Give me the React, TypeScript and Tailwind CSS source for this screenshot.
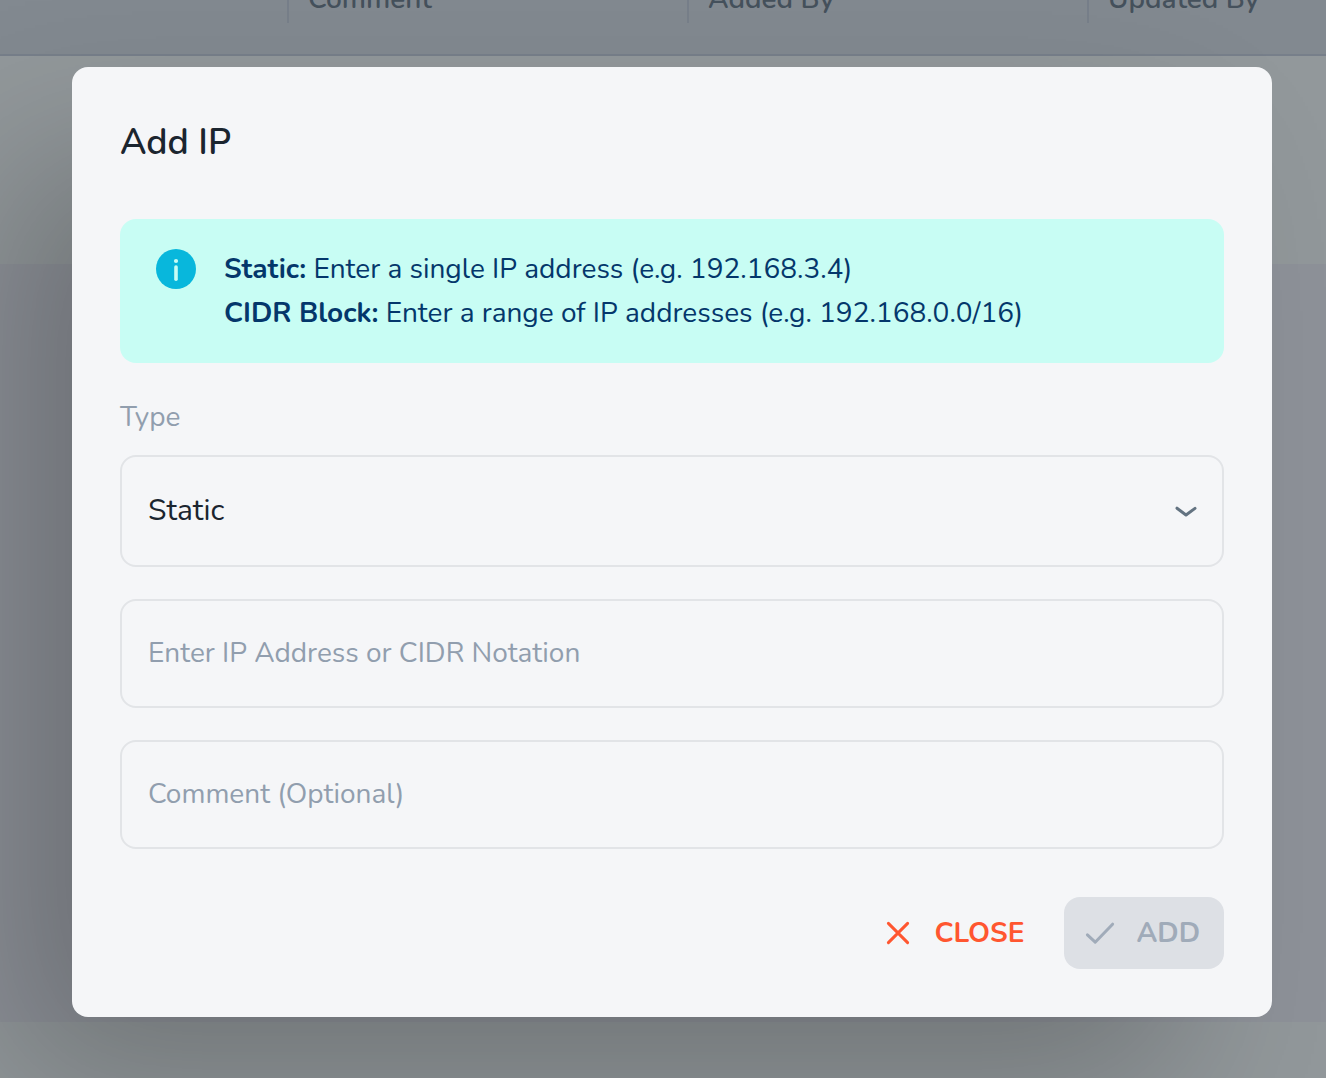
import { useState } from "react";

const columns = ["Comment", "Added By", "Updated By"];

const fieldClass =
    "block w-full rounded-2xl border-2 border-[#e2e4e7] bg-transparent px-[26px] pb-[2px] text-[#1b252f] outline-none placeholder:text-[#919eae] placeholder:opacity-100";

function InfoIcon() {
    return (
        <svg className="size-10 shrink-0" viewBox="0 0 40 40" fill="none" aria-hidden="true">
            <circle cx="20" cy="20" r="20" fill="#08b7dc" />
            <circle cx="20" cy="12" r="2.1" fill="#c8fdf4" />
            <path d="M20 18v12.2" stroke="#c8fdf4" strokeWidth="3.6" strokeLinecap="round" />
        </svg>
    );
}

function TableBackground() {
    return (
        <div className="flex min-h-screen flex-col bg-[#92989b]">
            <div className="flex h-14 flex-col justify-end overflow-hidden border-b-2 border-[#777f8a] bg-[#828990]">
                <table className="w-full shrink-0 table-fixed">
                    <thead>
                        <tr className="h-[110px]">
                            <th className="w-[287px] p-0" aria-label="IP" />
                            {columns.map((name, idx) => (
                                <th
                                    key={name}
                                    className={idx < 2 ? "w-[400px] p-0 text-left font-semibold" : "p-0 text-left font-semibold"}
                                >
                                    <div className="h-12 border-l-2 border-[#777f8a] pl-[19px] leading-[48px] whitespace-nowrap text-[#45515c]">
                                        {name}
                                    </div>
                                </th>
                            ))}
                        </tr>
                    </thead>
                </table>
            </div>
            <div className="mt-52 h-[758px] bg-[#8e9299]" />
        </div>
    );
}

function AddIpDialog() {
    const [type, setType] = useState("static");
    const [address, setAddress] = useState("");
    const [comment, setComment] = useState("");

    return (
        <div
            role="dialog"
            aria-labelledby="add-ip-title"
            className="w-full rounded-2xl bg-[#f5f6f8] p-12 shadow-[-80px_80px_160px_-16px_rgba(0,0,0,0.24)]"
        >
            <h2 id="add-ip-title" className="mb-12 text-4xl leading-[56px] font-semibold text-[#1b252f]">
                Add IP
            </h2>

            <div className="flex gap-7 rounded-2xl bg-[#c8fdf4] px-9 pt-7 pb-7 text-[#04376b]">
                <div className="pt-[2px]">
                    <InfoIcon />
                </div>
                <div className="leading-[44px]">
                    <p>
                        <strong>Static:</strong> Enter a single IP address (e.g. 192.168.3.4)
                    </p>
                    <p>
                        <strong>CIDR Block:</strong> Enter a range of IP addresses (e.g. 192.168.0.0/16)
                    </p>
                </div>
            </div>

            <form className="mt-8" onSubmit={(e) => e.preventDefault()}>
                <label htmlFor="ip-type" className="mb-4 block leading-[44px] text-[#919eae]">
                    Type
                </label>
                <div className="relative">
                    <select
                        id="ip-type"
                        value={type}
                        onChange={(e) => setType(e.target.value)}
                        className={`${fieldClass} h-28 appearance-none text-[30px]`}
                    >
                        <option value="static">Static</option>
                        <option value="cidr">CIDR Block</option>
                    </select>
                    <svg
                        className="pointer-events-none absolute top-1/2 right-6 h-7 w-7 -translate-y-1/2"
                        viewBox="0 0 28 28"
                        fill="none"
                        aria-hidden="true"
                    >
                        <path
                            d="M5 11.2 14 18l9-6.6"
                            stroke="#637381"
                            strokeWidth="3"
                            strokeLinecap="round"
                            strokeLinejoin="round"
                        />
                    </svg>
                </div>

                <input
                    type="text"
                    aria-label="IP address"
                    placeholder="Enter IP Address or CIDR Notation"
                    value={address}
                    onChange={(e) => setAddress(e.target.value)}
                    className={`${fieldClass} mt-8 h-[109px]`}
                />
                <input
                    type="text"
                    aria-label="Comment"
                    placeholder="Comment (Optional)"
                    value={comment}
                    onChange={(e) => setComment(e.target.value)}
                    className={`${fieldClass} mt-8 h-[109px]`}
                />

                <div className="mt-12 flex justify-end gap-4 font-bold">
                    <button type="button" className="flex h-[72px] items-center gap-4 rounded-2xl px-6 text-[#ff5630]">
                        <svg className="-ml-2 size-10" viewBox="0 0 40 40" fill="none" aria-hidden="true">
                            <path d="m10.4 10.4 19.2 19.2M29.6 10.4 10.4 29.6" stroke="currentColor" strokeWidth="3" strokeLinecap="round" />
                        </svg>
                        CLOSE
                    </button>
                    <button
                        type="submit"
                        disabled
                        className="flex h-[72px] items-center gap-4 rounded-2xl bg-[#dde0e5] px-6 text-[#a0abb9]"
                    >
                        <svg className="-ml-2 size-10" viewBox="0 0 40 40" fill="none" aria-hidden="true">
                            <path
                                d="m7.4 21.8 7.8 7.4L32.6 11.2"
                                stroke="currentColor"
                                strokeWidth="3"
                                strokeLinecap="round"
                                strokeLinejoin="round"
                            />
                        </svg>
                        ADD
                    </button>
                </div>
            </form>
        </div>
    );
}

export default function App() {
    return (
        <div className="relative min-h-screen overflow-hidden font-['Nunito','Lato',sans-serif] text-[28px]">
            <TableBackground />
            <div className="absolute inset-0 pt-[67px] pr-[54px] pl-[72px]">
                <AddIpDialog />
            </div>
        </div>
    );
}
